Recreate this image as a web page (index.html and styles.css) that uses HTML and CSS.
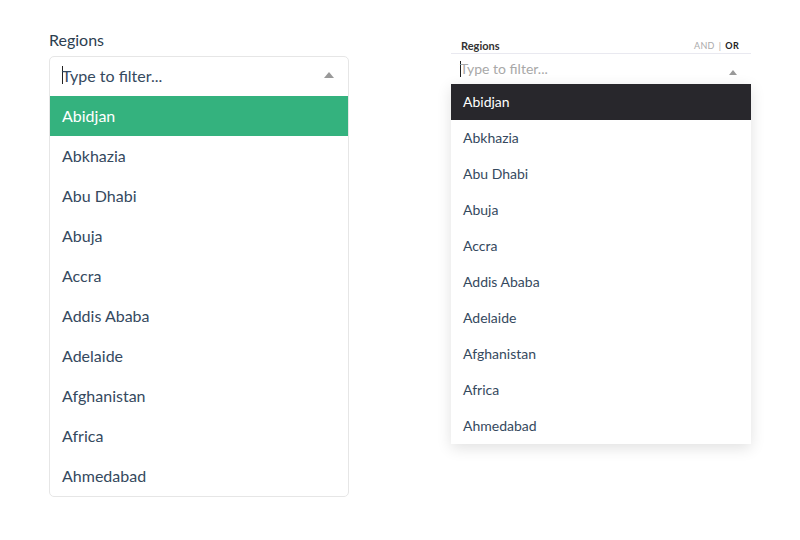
FILE: index.html
```html
<!DOCTYPE html>
<html>
<head>
<meta charset="utf-8">
<link rel="stylesheet" href="styles.css">
</head>
<body>
<div class="page">
  <div class="panel-a">
    <div class="label-a">Regions</div>
    <div class="select-a">
      <div class="input-a"><span class="caret"></span><span class="ph-a">Type to filter...</span><span class="arrow"></span></div>
      <ul class="list-a">
        <li class="hl">Abidjan</li>
        <li>Abkhazia</li>
        <li>Abu Dhabi</li>
        <li>Abuja</li>
        <li>Accra</li>
        <li>Addis Ababa</li>
        <li>Adelaide</li>
        <li>Afghanistan</li>
        <li>Africa</li>
        <li>Ahmedabad</li>
      </ul>
    </div>
  </div>
  <div class="panel-b">
    <div class="head-b"><span class="label-b">Regions</span><span class="ops"><span class="and">AND</span><span class="sep">|</span><span class="or">OR</span></span></div>
    <div class="input-b"><span class="caret caret-b"></span><span class="ph-b">Type to filter...</span><span class="arrow arrow-b"></span></div>
    <ul class="list-b">
      <li class="hl">Abidjan</li>
      <li>Abkhazia</li>
      <li>Abu Dhabi</li>
      <li>Abuja</li>
      <li>Accra</li>
      <li>Addis Ababa</li>
      <li>Adelaide</li>
      <li>Afghanistan</li>
      <li>Africa</li>
      <li>Ahmedabad</li>
    </ul>
  </div>
</div>
</body>
</html>
```
FILE: styles.css
```css
* { box-sizing: border-box; }
html, body { margin: 0; padding: 0; background: #fff; }
body { font-family: Lato, "Open Sans", sans-serif; color: #35495e; }
.page { display: flex; align-items: flex-start; padding: 30px 0 0 49px; gap: 102px; }
ul { list-style: none; margin: 0; padding: 0; }

.panel-a { width: 300px; }
.label-a { font-size: 16px; line-height: 20px; color: #2c3e50; margin-bottom: 6px; }
.select-a { border: 1px solid #e6e6e6; border-radius: 5px; overflow: hidden; }
.input-a { height: 39px; display: flex; align-items: center; padding: 0 14px 3px 12px; font-size: 16px; }
.caret { width: 1px; height: 18px; background: #222; margin-right: -1px; }
.ph-a { color: #35495e; flex: 1; }
.arrow { width: 0; height: 0; border-left: 5px solid transparent; border-right: 5px solid transparent; border-bottom: 6px solid #999; }
.list-a li { height: 40px; line-height: 40px; padding: 0 12px; font-size: 16px; color: #35495e; }
.list-a li.hl { background: #34b27e; color: #fff; }

.panel-b { width: 300px; margin-top: 7px; }
.head-b { display: flex; justify-content: space-between; align-items: center; height: 17px; padding: 0 12px 0 10px; border-bottom: 1px solid #e9e9f0; }
.label-b { font-size: 11px; font-weight: bold; color: #333; }
.ops { font-size: 9px; letter-spacing: 0.3px; }
.and { color: #aaa; }
.sep { color: #aaa; margin: 0 4px; }
.or { color: #222; font-weight: bold; }
.input-b { height: 30px; display: flex; align-items: center; padding: 0 14px 0 9px; font-size: 14px; }
.caret-b { height: 16px; }
.ph-b { color: #a8a8a8; flex: 1; margin-top: -2px; }
.arrow-b { border-left-width: 4.5px; border-right-width: 4.5px; border-bottom-width: 5px; margin-top: 6px; }
.list-b { box-shadow: 0 4px 14px rgba(0,0,0,0.12); background: #fff; }
.list-b li { height: 36px; line-height: 36px; padding: 0 12px; font-size: 14px; color: #35495e; }
.list-b li.hl { background: #28272c; color: #fff; }
```
